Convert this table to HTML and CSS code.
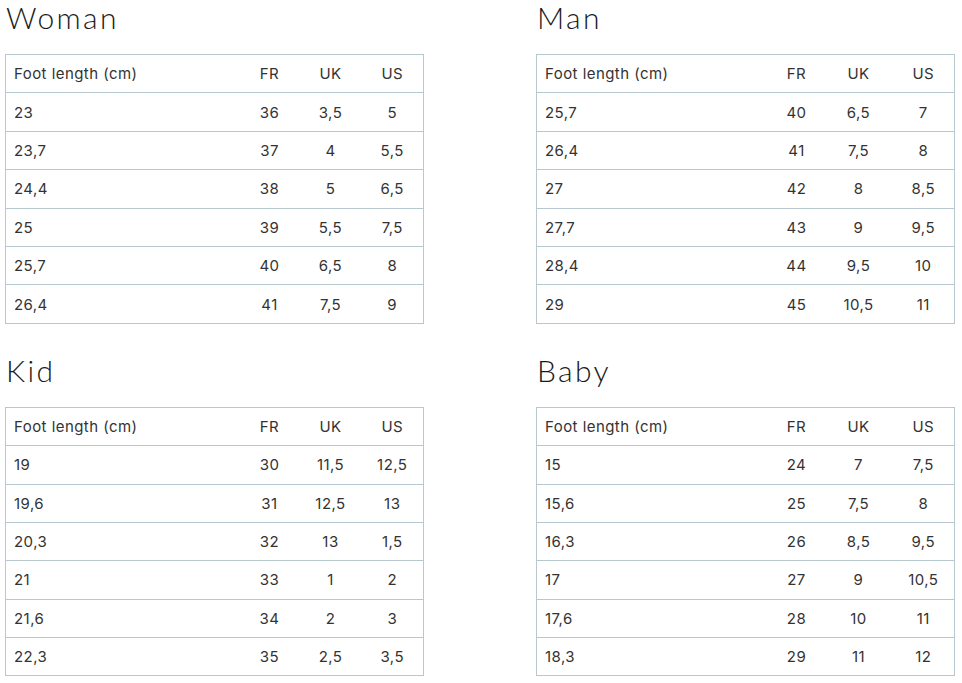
FILE: index.html
```html
<!DOCTYPE html>
<html>
<head>
<meta charset="utf-8">
<link rel="stylesheet" href="styles.css">
</head>
<body>
<div class="grid">
  <section class="block">
    <h2 class="title">Woman</h2>
    <table class="sizes">
      <colgroup><col><col class="c-fr"><col class="c-uk"><col class="c-us"></colgroup>
      <tr><td class="len">Foot length (cm)</td><td>FR</td><td>UK</td><td>US</td></tr>
      <tr><td class="len">23</td><td>36</td><td>3,5</td><td>5</td></tr>
      <tr><td class="len">23,7</td><td>37</td><td>4</td><td>5,5</td></tr>
      <tr><td class="len">24,4</td><td>38</td><td>5</td><td>6,5</td></tr>
      <tr><td class="len">25</td><td>39</td><td>5,5</td><td>7,5</td></tr>
      <tr><td class="len">25,7</td><td>40</td><td>6,5</td><td>8</td></tr>
      <tr><td class="len">26,4</td><td>41</td><td>7,5</td><td>9</td></tr>
    </table>
  </section>
  <section class="block">
    <h2 class="title">Man</h2>
    <table class="sizes sizes-wide">
      <colgroup><col><col class="c-fr"><col class="c-uk"><col class="c-us"></colgroup>
      <tr><td class="len">Foot length (cm)</td><td>FR</td><td>UK</td><td>US</td></tr>
      <tr><td class="len">25,7</td><td>40</td><td>6,5</td><td>7</td></tr>
      <tr><td class="len">26,4</td><td>41</td><td>7,5</td><td>8</td></tr>
      <tr><td class="len">27</td><td>42</td><td>8</td><td>8,5</td></tr>
      <tr><td class="len">27,7</td><td>43</td><td>9</td><td>9,5</td></tr>
      <tr><td class="len">28,4</td><td>44</td><td>9,5</td><td>10</td></tr>
      <tr><td class="len">29</td><td>45</td><td>10,5</td><td>11</td></tr>
    </table>
  </section>
  <section class="block">
    <h2 class="title">Kid</h2>
    <table class="sizes">
      <colgroup><col><col class="c-fr"><col class="c-uk"><col class="c-us"></colgroup>
      <tr><td class="len">Foot length (cm)</td><td>FR</td><td>UK</td><td>US</td></tr>
      <tr><td class="len">19</td><td>30</td><td>11,5</td><td>12,5</td></tr>
      <tr><td class="len">19,6</td><td>31</td><td>12,5</td><td>13</td></tr>
      <tr><td class="len">20,3</td><td>32</td><td>13</td><td>1,5</td></tr>
      <tr><td class="len">21</td><td>33</td><td>1</td><td>2</td></tr>
      <tr><td class="len">21,6</td><td>34</td><td>2</td><td>3</td></tr>
      <tr><td class="len">22,3</td><td>35</td><td>2,5</td><td>3,5</td></tr>
    </table>
  </section>
  <section class="block">
    <h2 class="title">Baby</h2>
    <table class="sizes sizes-wide">
      <colgroup><col><col class="c-fr"><col class="c-uk"><col class="c-us"></colgroup>
      <tr><td class="len">Foot length (cm)</td><td>FR</td><td>UK</td><td>US</td></tr>
      <tr><td class="len">15</td><td>24</td><td>7</td><td>7,5</td></tr>
      <tr><td class="len">15,6</td><td>25</td><td>7,5</td><td>8</td></tr>
      <tr><td class="len">16,3</td><td>26</td><td>8,5</td><td>9,5</td></tr>
      <tr><td class="len">17</td><td>27</td><td>9</td><td>10,5</td></tr>
      <tr><td class="len">17,6</td><td>28</td><td>10</td><td>11</td></tr>
      <tr><td class="len">18,3</td><td>29</td><td>11</td><td>12</td></tr>
    </table>
  </section>
</div>
</body>
</html>
```

FILE: styles.css
```css
html, body {
  margin: 0;
  padding: 0;
  background: #fff;
}
body {
  font-family: "Inter", "Noto Sans", sans-serif;
  color: #333;
}
.grid {
  display: grid;
  grid-template-columns: 419px 419px;
  column-gap: 112px;
  row-gap: 29px;
  padding: 0 0 0 5px;
}
.title {
  margin: 0;
  height: 54px;
  box-sizing: border-box;
  padding: 0 0 0 1px;
  font-family: "Lato", sans-serif;
  font-weight: 300;
  font-size: 30px;
  line-height: 34px;
  letter-spacing: 2.4px;
  color: #1a1a1a;
}
.sizes {
  width: 419px;
  table-layout: fixed;
  border-collapse: collapse;
  border: 1px solid #b8c8cf;
  font-size: 15px;
  letter-spacing: 0.45px;
}
.sizes .c-fr { width: 60px; }
.sizes .c-uk { width: 62px; }
.sizes .c-us { width: 62px; }
.sizes-wide .c-fr { width: 56px; }
.sizes-wide .c-uk { width: 68px; }
.sizes-wide .c-us { width: 62px; }
.sizes tr {
  height: 38.4px;
  border-top: 1px solid #b8c8cf;
}
.sizes td {
  padding: 0 8px;
  text-align: center;
  color: #333;
  white-space: nowrap;
}
.sizes td.len {
  text-align: left;
}
```
